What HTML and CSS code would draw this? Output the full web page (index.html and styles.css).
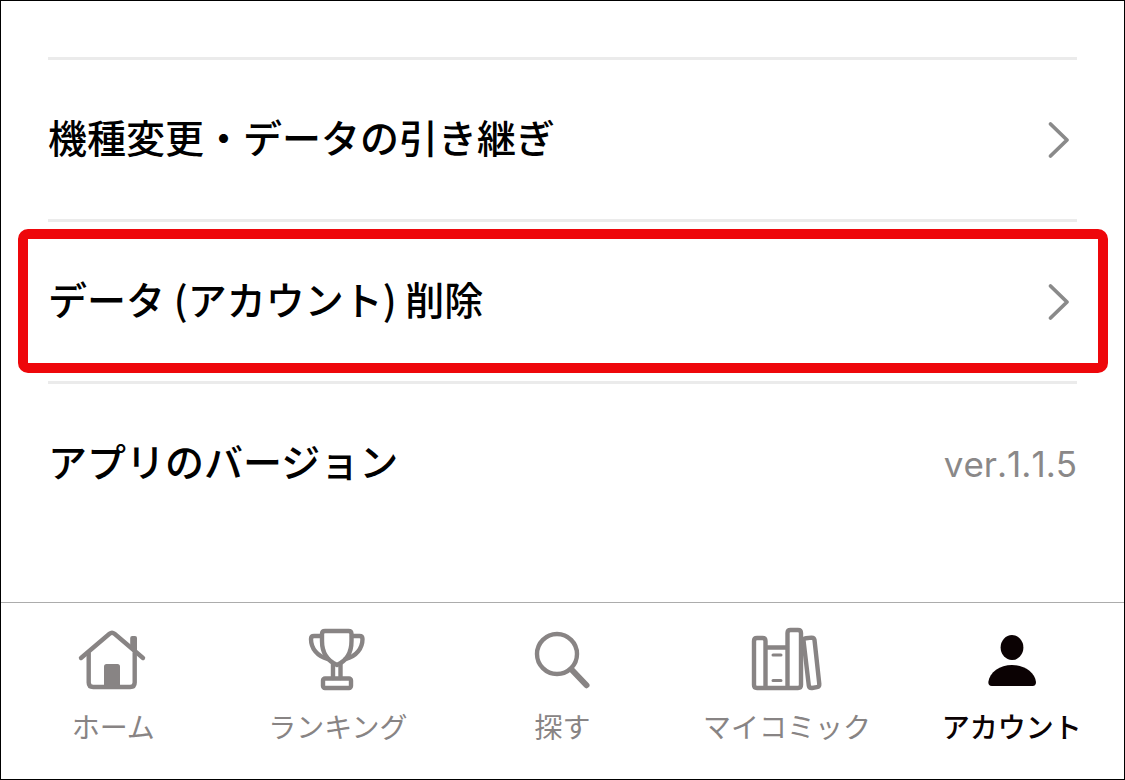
FILE: index.html
```html
<!DOCTYPE html>
<html lang="ja">
<head>
<meta charset="utf-8">
<meta name="viewport" content="width=device-width, initial-scale=1">
<title>アカウント</title>
<link rel="stylesheet" href="styles.css">
</head>
<body>
<div class="screen">
  <main class="content">
    <ul class="settings">
      <li class="settings-item">
        <a class="row" href="#transfer">
          <span class="row-label">機種変更・データの引き継ぎ</span>
          <svg class="chevron" viewBox="0 0 32 40" aria-hidden="true"><path d="M5.5 4 22 20 5.5 36"/></svg>
        </a>
      </li>
      <li class="settings-item highlighted">
        <a class="row" href="#delete">
          <span class="row-label">データ (アカウント) 削除</span>
          <svg class="chevron" viewBox="0 0 32 40" aria-hidden="true"><path d="M5.5 4 22 20 5.5 36"/></svg>
        </a>
      </li>
      <li class="settings-item">
        <div class="row">
          <span class="row-label">アプリのバージョン</span>
          <span class="version">ver.1.1.5</span>
        </div>
      </li>
    </ul>
  </main>
  <nav class="tabs">
    <a class="tab" href="#home">
      <svg class="tab-icon" viewBox="0 0 80 72" aria-hidden="true">
        <path d="M8 36 36.500 11.800Q39 9.800 41.500 11.800L70 36"/>
        <path d="M15.700 31V60.500Q15.700 65 20.200 65H57.200Q61.700 65 61.700 60.500V31"/>
        <path class="solid" d="M57.200 27V16Q57.200 14 59.200 14H62Q64 14 64 16V33Z"/>
        <path class="solid" d="M31 65V44.500Q31 42 33.500 42H44.500Q47 42 47 44.500V65Z"/>
      </svg>
      <span class="tab-label">ホーム</span>
    </a>
    <a class="tab" href="#ranking">
      <svg class="tab-icon" viewBox="0 0 80 72" aria-hidden="true">
        <path d="M27 9H50.500Q53.500 9 53.500 12V19C53.500 31 48 39 39 43C30 39 24 31 24 19V12Q24 9 27 9Z"/>
        <path d="M23.500 14H16Q13 14 13 17C13 26 19 34.500 30 37"/>
        <path d="M54 14H61.500Q64.500 14 64.500 17C64.500 26 58.500 34.500 47.500 37"/>
        <path d="M35 42V56M42.500 42V56"/>
        <rect x="25" y="56.500" width="28" height="9.500" rx="2"/>
      </svg>
      <span class="tab-label">ランキング</span>
    </a>
    <a class="tab" href="#search">
      <svg class="tab-icon" viewBox="0 0 80 72" aria-hidden="true">
        <circle cx="35" cy="32" r="20"/>
        <path class="handle" d="M49.500 47.500 64.500 63.200"/>
      </svg>
      <span class="tab-label">探す</span>
    </a>
    <a class="tab" href="#comics">
      <svg class="tab-icon" viewBox="0 0 80 72" aria-hidden="true">
        <path d="M18.500 66V19Q18.500 16 15.500 16H10Q7 16 7 19V63Q7 66 10 66H51Q54 66 54 63V11Q54 8 51 8H43.500Q40.500 8 40.500 11V66M18.500 25.500H40.500"/>
        <path class="thin" d="M26 33H34M26 58.500H34"/>
        <path d="M56.500 18.500Q56.500 16.500 59 16.200L64.500 15.600Q67 15.500 67.500 18L72.300 62Q72.500 64.800 70 65.200L65 66Q62.300 66.200 61.800 63.500Z"/>
      </svg>
      <span class="tab-label">マイコミック</span>
    </a>
    <a class="tab active" href="#account" aria-current="page">
      <svg class="tab-icon" viewBox="0 0 80 72" aria-hidden="true">
        <ellipse class="solid" cx="40" cy="25.500" rx="11.400" ry="12.500"/>
        <path class="solid" d="M16.300 60C17.500 50 28 43 40 43S62.800 50 64 60Q64 64 60.500 64H19.800Q16.300 64 16.300 60Z"/>
      </svg>
      <span class="tab-label">アカウント</span>
    </a>
  </nav>
</div>
</body>
</html>
```
FILE: styles.css
```css
* {
  box-sizing: border-box;
}

body {
  margin: 0;
  background: #fff;
  color: #000;
  font-family: "Noto Sans CJK JP", sans-serif;
}

a {
  color: inherit;
  text-decoration: none;
}

.screen {
  display: flex;
  flex-direction: column;
  min-height: 100vh;
  border: 1px solid #000;
}

.content {
  flex: 1;
  padding: 56px 47px 0;
}

.settings {
  margin: 0;
  padding: 0;
  list-style: none;
}

.settings-item {
  position: relative;
  border-top: 3px solid #ebebeb;
}

.row {
  display: flex;
  align-items: center;
  justify-content: space-between;
  gap: 24px;
  min-height: 159px;
}

.row-label {
  padding-bottom: 8px;
  font-size: 39px;
  font-weight: 500;
  line-height: 56px;
}

.highlighted::after {
  content: "";
  position: absolute;
  inset: 7px -31px 8px -30px;
  border: 10px solid #ee070b;
  border-radius: 10px;
  pointer-events: none;
}

.chevron {
  flex: none;
  width: 32px;
  height: 40px;
  fill: none;
  stroke: #8a8a8a;
  stroke-width: 3.8;
  stroke-linecap: round;
  stroke-linejoin: round;
}

.version {
  color: #8a8888;
  font-family: Inter, sans-serif;
  font-size: 35px;
  font-kerning: none;
  line-height: 56px;
}

.tabs {
  display: grid;
  grid-template-columns: repeat(5, 1fr);
  padding: 19px 0 33px;
  border-top: 1px solid #acacac;
}

.tab {
  display: flex;
  flex-direction: column;
  align-items: center;
  gap: 12px;
  color: #888484;
}

.tab.active {
  color: #0b0203;
}

.tab-icon {
  width: 80px;
  height: 72px;
  fill: none;
  stroke: currentColor;
  stroke-width: 4.4;
  stroke-linecap: round;
  stroke-linejoin: round;
}

.tab-icon .solid {
  fill: currentColor;
  stroke: none;
}

.tab-icon .thin {
  stroke-width: 3;
}

.tab-icon .handle {
  stroke-width: 6;
}

.tab-label {
  font-size: 28px;
  line-height: 40px;
  white-space: nowrap;
}

.active .tab-label {
  font-weight: 500;
}
```
